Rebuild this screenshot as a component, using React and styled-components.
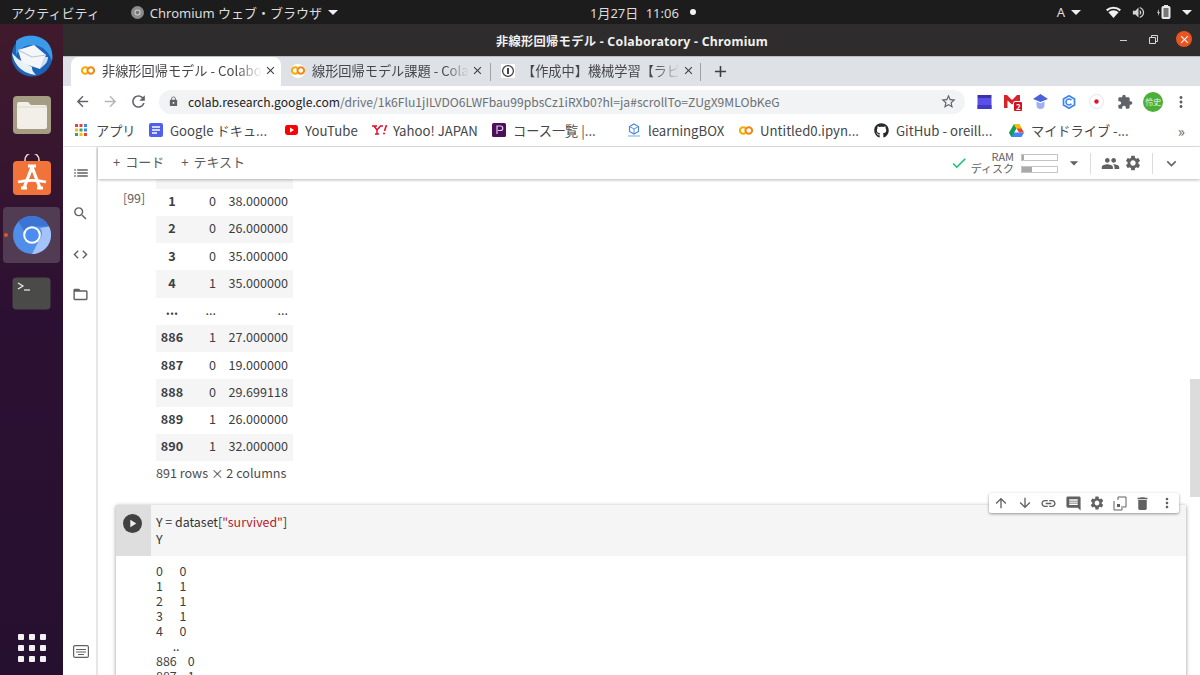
import styled, { createGlobalStyle } from "styled-components";
import {
  MdArrowBack,
  MdArrowForward,
  MdRefresh,
  MdLock,
  MdStarBorder,
  MdExtension,
  MdMoreVert,
  MdClose,
  MdAdd,
  MdList,
  MdSearch,
  MdCode,
  MdFolderOpen,
  MdCheck,
  MdArrowDropDown,
  MdPeople,
  MdSettings,
  MdExpandMore,
  MdArrowUpward,
  MdArrowDownward,
  MdLink,
  MdInsertComment,
  MdDelete,
  MdPlayArrow,
  MdVolumeUp,
} from "react-icons/md";
import { FaGithub } from "react-icons/fa";

const desktopFont = `"Noto Sans", "Noto Sans CJK JP", sans-serif`;
const pageFont = `"Noto Sans CJK JP", "Noto Sans", sans-serif`;

const GlobalStyle = createGlobalStyle`
  html, body {
    margin: 0;
    width: 1200px;
    height: 675px;
    overflow: hidden;
    font-family: ${pageFont};
  }
  * { box-sizing: border-box; }
`;

const Screen = styled.div`
  width: 1200px;
  height: 675px;
  display: flex;
  flex-direction: column;
  overflow: hidden;
`;

const TopBar = styled.div`
  height: 24px;
  flex: none;
  background: #1c1c1c;
  color: #dcdcdc;
  font-family: ${desktopFont};
  font-size: 13px;
  display: grid;
  grid-template-columns: 579px auto 1fr;
  align-items: center;
  padding: 0 8px 0 11px;
`;

const TopLeft = styled.div`
  display: flex;
  align-items: center;
`;

const AppMenu = styled.div`
  display: flex;
  align-items: center;
  gap: 6px;
  margin-left: 31px;
`;

const Clock = styled.div`
  display: flex;
  align-items: center;
  gap: 8px;
  word-spacing: 4px;
`;

const Dot = styled.span`
  width: 6px;
  height: 6px;
  margin-left: 3px;
  border-radius: 50%;
  background: #f2f2f2;
`;

const TopRight = styled.div`
  display: flex;
  align-items: center;
  justify-content: flex-end;
  gap: 10px;
`;

const Caret = styled.span`
  width: 0;
  height: 0;
  border-left: 5px solid transparent;
  border-right: 5px solid transparent;
  border-top: 5px solid #efefef;
  margin-left: ${(p) => p.$left || 0}px;
`;

const SpeakerIcon = styled(MdVolumeUp)`
  color: #d4d4d4;
`;

const WifiSlot = styled.span`
  display: flex;
  margin-left: 15px;
`;

const Body = styled.div`
  flex: 1;
  display: flex;
  min-height: 0;
`;

const Dock = styled.div`
  width: 63px;
  flex: none;
  background: linear-gradient(180deg, #401a2c 0%, #2c1033 45%, #26102f 100%);
  display: flex;
  flex-direction: column;
  align-items: center;
  padding: 2px 0 13px;
`;

const DockSlot = styled.div`
  height: 56px;
  width: 57px;
  margin: ${(p) => (p.$active ? "2.75px 0 0.75px" : "1.75px 0")};
  flex: none;
  position: relative;
  display: flex;
  align-items: center;
  justify-content: center;
  border-radius: 4px;
  background: ${(p) => (p.$active ? "#523c53" : "transparent")};
`;

const ActiveDot = styled.span`
  position: absolute;
  left: 1px;
  top: 26px;
  width: 4px;
  height: 4px;
  border-radius: 50%;
  background: #e95420;
`;

const DockGrid = styled.div`
  margin-top: auto;
  display: grid;
  grid-template-columns: repeat(3, 6px);
  gap: 5px;
`;

const GridDot = styled.span`
  width: 6px;
  height: 6px;
  border-radius: 1px;
  background: #f2f0f2;
`;

const Window = styled.div`
  flex: 1;
  min-width: 0;
  display: flex;
  flex-direction: column;
  background: #fff;
`;

const TitleBar = styled.div`
  height: 32px;
  flex: none;
  position: relative;
  background: #2e2c2c;
  color: #f0f0f0;
  font-family: ${desktopFont};
  font-size: 12.3px;
  font-weight: 700;
  display: flex;
  align-items: center;
  justify-content: center;
  padding: 2px 0 0 1px;
  letter-spacing: 0.25px;
`;

const WindowButtons = styled.div`
  position: absolute;
  right: 8px;
  top: 7px;
  display: flex;
  align-items: center;
`;

const MinButton = styled.span`
  width: 7px;
  height: 1.5px;
  background: #cfcfcf;
  margin: 3px 22px 0 0;
`;

const RestoreIcon = styled.svg`
  margin-right: 18px;
`;

const CloseButton = styled.span`
  width: 16px;
  height: 16px;
  border-radius: 50%;
  background: #e95420;
  color: #fff;
  display: flex;
  align-items: center;
  justify-content: center;
`;

const TabStrip = styled.div`
  height: 30px;
  flex: none;
  background: #dee1e6;
  border-top: 1px solid #b9bcc1;
  display: flex;
  align-items: flex-end;
  padding-left: 8px;
  color: #45474a;
  font-size: 13.2px;
`;

const Tab = styled.div`
  width: ${(p) => (p.$active ? 210 : 209)}px;
  height: 29px;
  display: flex;
  align-items: center;
  padding: 0 7px 2px 10px;
  border-radius: 8px 8px 0 0;
  position: relative;
  background: ${(p) => (p.$active ? "#fff" : "transparent")};
`;

const TabIcon = styled.span`
  width: 14px;
  height: 14px;
  flex: none;
  display: flex;
  align-items: center;
  justify-content: center;
  margin-right: 7px;
  border-radius: 50%;
  background: ${(p) => (p.$active ? "transparent" : "#fff")};
`;

const TabTitle = styled.span`
  flex: 1;
  white-space: nowrap;
  -webkit-mask-image: linear-gradient(90deg, #000 84%, transparent 100%);
  mask-image: linear-gradient(90deg, #000 84%, transparent 100%);
`;

const TabClose = styled.span`
  flex: none;
  display: flex;
  margin-left: 2px;
  color: #3c4043;
`;

const TabSep = styled.span`
  width: 1px;
  height: 18px;
  flex: none;
  background: #9ea1a6;
  margin-bottom: 5px;
`;

const NewTab = styled.span`
  display: flex;
  margin: 0 0 5px 10px;
  color: #3c4043;
`;

const NavBar = styled.div`
  height: 31px;
  flex: none;
  display: flex;
  align-items: center;
  padding-left: 5px;
  color: #5f6368;
`;

const NavButton = styled.span`
  width: 28px;
  display: flex;
  justify-content: center;
  color: ${(p) => (p.$off ? "#b3b5b8" : "#5f6368")};
`;

const Omnibox = styled.div`
  width: 806px;
  height: 24px;
  margin-left: 7px;
  background: #f1f3f4;
  border-radius: 12px;
  display: flex;
  align-items: center;
  padding: 0 8px 0 9px;
  font-size: 12.13px;
`;

const Url = styled.span`
  flex: 1;
  margin: 0 0 1px 9px;
  color: #6b7074;
  white-space: nowrap;
`;

const UrlHost = styled.span`
  color: #202124;
`;

const ExtTray = styled.div`
  display: grid;
  grid-template-columns: repeat(8, 28.2px);
  justify-items: center;
  align-items: center;
  margin-left: 5px;
`;

const Avatar = styled.span`
  width: 20px;
  height: 20px;
  border-radius: 50%;
  background: #4caf38;
  color: #e8f5e2;
  font-size: 8px;
  display: flex;
  align-items: center;
  justify-content: center;
`;

const Badge = styled.span`
  position: absolute;
  right: -3px;
  bottom: -4px;
  width: 10px;
  height: 11px;
  background: #d50f1c;
  border: 1px solid #fff;
  border-radius: 2px;
  color: #fff;
  font-size: 8px;
  font-weight: 700;
  line-height: 9px;
  text-align: center;
`;

const ExtIcon = styled.span`
  position: relative;
  display: flex;
`;

const BookmarkBar = styled.div`
  height: 30px;
  flex: none;
  display: flex;
  align-items: center;
  padding: 0 0 3px 12px;
  border-bottom: 1px solid #e3e4e6;
  color: #45474a;
  font-size: 13.2px;
`;

const Bookmark = styled.div`
  width: ${(p) => p.$w}px;
  flex: none;
  display: flex;
  align-items: center;
  gap: ${(p) => p.$gap || 7}px;
  white-space: nowrap;
`;

const MoreBookmarks = styled.span`
  margin-left: auto;
  margin-right: 15px;
  font-size: 15px;
  color: #5f6368;
`;

const Workspace = styled.div`
  flex: 1;
  min-height: 0;
  display: flex;
`;

const SideRail = styled.div`
  width: 35px;
  flex: none;
  border-right: 2px solid #e6e6e6;
  display: flex;
  flex-direction: column;
  align-items: center;
  padding: 6px 0 0 2px;
  color: #616161;
`;

const RailIcon = styled.span`
  height: 40.5px;
  flex: none;
  display: flex;
  align-items: center;
`;

const RailFoot = styled.span`
  margin-top: auto;
  margin-bottom: 17px;
  display: flex;
`;

const MainColumn = styled.div`
  flex: 1;
  min-width: 0;
  display: flex;
  flex-direction: column;
`;

const ColabBar = styled.div`
  height: 32px;
  flex: none;
  position: relative;
  z-index: 2;
  display: flex;
  align-items: center;
  padding: 0 19px 3px 15px;
  color: #5a5a5a;
  font-size: 13px;
  background: #fff;
  box-shadow: 0 1px 3px rgba(0, 0, 0, 0.28);
`;

const AddButton = styled.span`
  display: flex;
  align-items: center;
  gap: 5px;
  margin-right: 17px;
`;

const Resources = styled.div`
  margin-left: auto;
  margin-bottom: -3px;
  display: flex;
  align-items: center;
  color: #5f6368;
`;

const ResourceLabels = styled.div`
  display: flex;
  flex-direction: column;
  align-items: flex-end;
  margin: -2px 0 0 3px;
  font-size: 11px;
  line-height: 12px;
`;

const Meters = styled.div`
  display: flex;
  flex-direction: column;
  gap: 5px;
  margin-left: 7px;
`;

const Meter = styled.div`
  width: 37px;
  height: 7px;
  border: 1px solid #c4c4c4;
  background: linear-gradient(90deg, #a9a9a9 ${(p) => p.$pct}%, #fff ${(p) => p.$pct}%);
`;

const BarSep = styled.span`
  width: 1px;
  height: 21px;
  background: #dcdcdc;
  margin: 0 ${(p) => p.$right}px 0 ${(p) => p.$left}px;
`;

const BarIcon = styled.span`
  display: flex;
  margin-right: ${(p) => p.$right || 0}px;
  margin-left: ${(p) => p.$left || 0}px;
  color: #616161;
`;

const Notebook = styled.div`
  flex: 1;
  min-height: 0;
  position: relative;
  overflow: hidden;
  padding: 0 14px 0 18px;
  color: #3c4043;
  font-size: 12.6px;
`;

const ScrollThumb = styled.div`
  position: absolute;
  right: 0;
  top: 200px;
  width: 10px;
  height: 118px;
  background: #dcdcdc;
`;

const OutputBlock = styled.div`
  display: flex;
  height: 326px;
`;

const Prompt = styled.div`
  width: 40px;
  flex: none;
  padding: 11px 0 0 7px;
  color: #616161;
  font-size: 12.4px;
  line-height: 16px;
`;

const OutputBody = styled.div`
  display: flex;
  flex-direction: column;
`;

const DataTable = styled.table`
  border-collapse: collapse;
  width: 137px;
  table-layout: fixed;
  color: #3c4043;
`;

const DataRow = styled.tr`
  height: ${(p) => (p.$short ? 9.5 : 27.25)}px;
  background: ${(p) => (p.$shade ? "#f5f5f5" : "#fff")};
`;

const IndexCell = styled.th`
  width: 32px;
  padding: 0 0 3px;
  font-weight: 700;
  text-align: center;
`;

const ValueCell = styled.td`
  width: ${(p) => p.$w}px;
  padding: 0 5px 3px 0;
  text-align: right;
`;

const RowCount = styled.div`
  margin-top: 3px;
  line-height: 18px;
  color: #4a4d50;
`;

const Cell = styled.div`
  position: relative;
  height: 300px;
  background: #fff;
  box-shadow: 0 1px 4px rgba(0, 0, 0, 0.42);
`;

const CellInput = styled.div`
  height: 51px;
  display: flex;
  background: #f5f5f5;
`;

const RunGutter = styled.div`
  width: 35px;
  flex: none;
  background: #dedede;
  padding: 9px 0 0 7px;
`;

const RunButton = styled.span`
  width: 19px;
  height: 19px;
  border-radius: 50%;
  background: #424242;
  color: #f0f0f0;
  display: flex;
  align-items: center;
  justify-content: center;
`;

const Code = styled.div`
  padding: 9px 0 0 5px;
  line-height: 16.5px;
  color: #2f3437;
  font-size: 12.4px;
  white-space: pre;
`;

const Str = styled.span`
  color: #b3202c;
`;

const Stdout = styled.pre`
  margin: 0;
  padding: 8px 0 0 40px;
  font-family: ${pageFont};
  font-size: 12.4px;
  line-height: 15px;
  color: #3c4043;
`;

const CellTools = styled.div`
  position: absolute;
  right: 7px;
  top: -12px;
  width: 190px;
  height: 20px;
  background: #fff;
  border-radius: 2px;
  box-shadow: 0 1px 3px rgba(0, 0, 0, 0.4);
  display: flex;
  align-items: center;
  justify-content: space-between;
  padding: 0 4px;
  color: #616161;
  z-index: 1;
`;

const ColabLogo = () => (
  <svg width="14" height="9" viewBox="0 0 28 18">
    <path d="M13 4.5A6.5 6.5 0 1 0 13 13.5" fill="none" stroke="#f9ab00" strokeWidth="4" />
    <path d="M15 4.5A6.5 6.5 0 1 1 15 13.5A6.5 6.5 0 0 1 15 4.5" fill="none" stroke="#f08a10" strokeWidth="4" />
  </svg>
);

const ChromiumLogo = ({ size = 38 }) => (
  <svg width={size} height={size} viewBox="0 0 38 38">
    <circle cx="19" cy="19" r="19" fill="#4f8fea" />
    <path d="M19 0A19 19 0 0 1 36 10.5L19 10.5A8.5 8.5 0 0 0 11 15L5.5 5.5A19 19 0 0 1 19 0Z" fill="#3b74d4" />
    <path d="M36 10.5A19 19 0 0 1 19 38L26.5 23.5A8.5 8.5 0 0 0 27 12Z" fill="#a3c3fa" />
    <circle cx="19" cy="19" r="8.8" fill="#fff" />
    <circle cx="19" cy="19" r="6.8" fill="#4a8cf0" />
  </svg>
);

const Thunderbird = () => (
  <svg width="44" height="44" viewBox="0 0 44 44">
    <circle cx="22" cy="22" r="20.5" fill="#1d63b8" />
    <path d="M6 7C12 1 26 -1 36 7C42 13 43 21 42 27C38 15 30 11 22 11C14 11 10 15 6 21Z" fill="#3c9be8" />
    <path d="M2 19C4 29 10 39 26 41C22 37 22 35 22 33L8 25Z" fill="#e8f0fa" />
    <path d="M8 16L24 11L36 21L30 35L12 29Z" fill="#f4f6fa" />
    <path d="M8 16L22 23L36 21" fill="none" stroke="#b9c6d8" strokeWidth="1.2" />
    <path d="M30 35C34 31 38 29 38 23L34 23Z" fill="#cfe0f5" />
  </svg>
);

const FilesIcon = () => (
  <svg width="40" height="40" viewBox="0 0 40 40">
    <rect x="1" y="1" width="38" height="38" rx="4" fill="#a59c84" />
    <path d="M5 9a2 2 0 0 1 2-2h9l3 3h14a2 2 0 0 1 2 2v20a2 2 0 0 1-2 2H7a2 2 0 0 1-2-2Z" fill="#f2efe9" />
    <path d="M5 12h30" stroke="#dedad1" strokeWidth="1" />
  </svg>
);

const StoreIcon = () => (
  <svg width="40" height="42" viewBox="0 0 40 42">
    <path d="M13 9V6a7 7 0 0 1 14 0v3" fill="none" stroke="#e9d6c8" strokeWidth="1.6" />
    <rect x="1" y="7" width="38" height="34" rx="4" fill="#f0743a" />
    <path d="M20 13L12 34M20 13L28 34" stroke="#fff" strokeWidth="3.2" fill="none" />
    <path d="M16 12H24M6 28C14 26 26 26 34 28M9 34H15M25 34H31" stroke="#fff" strokeWidth="2.8" fill="none" />
  </svg>
);

const TerminalIcon = () => (
  <svg width="39" height="33" viewBox="0 0 39 33">
    <rect x="0.5" y="0.5" width="38" height="32" rx="4" fill="#4a4a48" />
    <path d="M6 6L11 9L6 12" fill="none" stroke="#f0f0f0" strokeWidth="1.2" />
    <path d="M12 13H18" stroke="#f0f0f0" strokeWidth="1.2" />
  </svg>
);

const MiniChromium = () => (
  <svg width="13" height="13" viewBox="0 0 13 13">
    <circle cx="6.5" cy="6.5" r="6.5" fill="#8b8b8b" />
    <circle cx="6.5" cy="6.5" r="3" fill="#d0d0d0" />
    <circle cx="6.5" cy="6.5" r="2" fill="#777" />
  </svg>
);

const WifiIcon = () => (
  <svg width="15" height="12" viewBox="0 0 15 12">
    <path d="M0 3.6A11 11 0 0 1 15 3.6L13.6 5.2A9 9 0 0 0 1.4 5.2Z" fill="#f0f0f0" />
    <path d="M2.4 6.2A7.6 7.6 0 0 1 12.6 6.2L7.5 12Z" fill="#f0f0f0" />
  </svg>
);

const AppsIcon = () => (
  <svg width="12" height="12" viewBox="0 0 12 12">
    {["#ea4335", "#ea4335", "#4285f4", "#fbbc04", "#34a853", "#4285f4", "#34a853", "#fbbc04", "#ea4335"].map((c, i) => (
      <rect key={i} x={(i % 3) * 4.5} y={Math.floor(i / 3) * 4.5} width="3" height="3" fill={c} />
    ))}
  </svg>
);

const DocsIcon = () => (
  <svg width="14" height="14" viewBox="0 0 14 14">
    <rect width="14" height="14" rx="2" fill="#4f5ff0" />
    <path d="M3 4H11M3 7H11M3 10H8" stroke="#fff" strokeWidth="1.3" />
  </svg>
);

const YouTubeIcon = () => (
  <svg width="13" height="10" viewBox="0 0 13 10">
    <rect width="13" height="10" rx="2.4" fill="#f00" />
    <path d="M5 2.6L9 5L5 7.4Z" fill="#fff" />
  </svg>
);

const YahooIcon = () => (
  <svg width="15" height="10" viewBox="0 0 15 10">
    <path d="M0 1H5M8 1H11M2 1L5 5V9M8.5 1L5 5M3 9H7" fill="none" stroke="#e5102d" strokeWidth="1.5" />
    <path d="M14.5 0L12.5 6" stroke="#e5102d" strokeWidth="1.6" />
    <circle cx="12" cy="8.4" r="1" fill="#e5102d" />
  </svg>
);

const PurpleIcon = () => (
  <svg width="14" height="14" viewBox="0 0 14 14">
    <rect width="14" height="14" rx="1.5" fill="#4b0f5c" />
    <path d="M5 11V3H8.5A2.2 2.2 0 0 1 8.5 7.5H6" fill="none" stroke="#e4cde9" strokeWidth="1.2" />
  </svg>
);

const LearningIcon = () => (
  <svg width="14" height="14" viewBox="0 0 14 14">
    <path d="M7 1L11.5 3.5V8.5L7 11L2.5 8.5V3.5Z" fill="none" stroke="#4a86d8" strokeWidth="1.2" />
    <path d="M2.5 3.5L7 6L11.5 3.5M7 6V11" fill="none" stroke="#4a86d8" strokeWidth="0.9" />
    <path d="M1 13H13" stroke="#8fb6e6" strokeWidth="1.2" />
  </svg>
);

const DriveIcon = () => (
  <svg width="15" height="13" viewBox="0 0 15 13">
    <path d="M0 8.5L2.5 13H12.5L15 8.5Z" fill="#4285f4" />
    <path d="M5 0L0 8.5L2.5 13L7.5 4.4Z" fill="#0f9d58" />
    <path d="M10 0L15 8.5H10L7.5 4.4Z" fill="#ea4335" />
    <path d="M5 0H10L12.5 4.4H7.5Z" fill="#fbbc04" />
  </svg>
);

const MirrorIcon = () => (
  <svg width="14" height="15" viewBox="0 0 14 15">
    <path d="M5 1H13V11H8" fill="none" stroke="#616161" strokeWidth="1" />
    <path d="M5 1V4M1 5V14H9V12" fill="none" stroke="#616161" strokeWidth="1" />
    <rect x="4" y="8" width="3" height="3" fill="#616161" />
  </svg>
);

const TerminalRailIcon = () => (
  <svg width="16" height="13" viewBox="0 0 16 13">
    <rect x="0.6" y="0.6" width="14.8" height="11.8" rx="1.5" fill="none" stroke="#616161" strokeWidth="1.2" />
    <path d="M3 4.5H13M3 7H13M5 9.5H11" stroke="#616161" strokeWidth="1.2" />
  </svg>
);

const rows = [
  ["1", "0", "38.000000"],
  ["2", "0", "26.000000"],
  ["3", "0", "35.000000"],
  ["4", "1", "35.000000"],
  ["...", "...", "..."],
  ["886", "1", "27.000000"],
  ["887", "0", "19.000000"],
  ["888", "0", "29.699118"],
  ["889", "1", "26.000000"],
  ["890", "1", "32.000000"],
];

const shaded = ["2", "4", "886", "888", "890"];

const bookmarks = [
  { w: 74, icon: <AppsIcon />, gap: 9, label: "アプリ" },
  { w: 136, icon: <DocsIcon />, label: "Google ドキュ..." },
  { w: 87, icon: <YouTubeIcon />, label: "YouTube" },
  { w: 120, icon: <YahooIcon />, gap: 6, label: "Yahoo! JAPAN" },
  { w: 135, icon: <PurpleIcon />, label: "コース一覧 |..." },
  { w: 112, icon: <LearningIcon />, label: "learningBOX" },
  { w: 135, icon: <ColabLogo />, label: "Untitled0.ipyn..." },
  { w: 135, icon: <FaGithub size={15} color="#24292e" />, label: "GitHub - oreill..." },
  { w: 130, icon: <DriveIcon />, label: "マイドライブ -..." },
];

const stdout = `0      0
1      1
2      1
3      1
4      0
      ..
886    0
887    1`;

export default function App() {
  return (
    <Screen>
      <GlobalStyle />
      <TopBar>
        <TopLeft>
          アクティビティ
          <AppMenu>
            <MiniChromium />
            Chromium ウェブ・ブラウザ
            <Caret />
          </AppMenu>
        </TopLeft>
        <Clock>
          1月27日 11:06
          <Dot />
        </Clock>
        <TopRight>
          A
          <Caret $left={-4} />
          <WifiSlot>
            <WifiIcon />
          </WifiSlot>
          <SpeakerIcon size={15} />
          <svg width="16" height="14" viewBox="0 0 16 14">
            <path d="M1 8L3 4V7H4L2 11V8Z" fill="#bbb" />
            <rect x="6" y="1.5" width="8" height="12" rx="1" fill="#e8e8e8" stroke="#e8e8e8" />
            <rect x="7.5" y="3" width="5" height="9" fill="#777" />
            <rect x="8" y="0" width="4" height="2" fill="#e8e8e8" />
          </svg>
          <Caret />
        </TopRight>
      </TopBar>
      <Body>
        <Dock>
          <DockSlot>
            <Thunderbird />
          </DockSlot>
          <DockSlot>
            <FilesIcon />
          </DockSlot>
          <DockSlot>
            <StoreIcon />
          </DockSlot>
          <DockSlot $active>
            <ActiveDot />
            <ChromiumLogo />
          </DockSlot>
          <DockSlot>
            <TerminalIcon />
          </DockSlot>
          <DockGrid>
            {Array.from({ length: 9 }, (_, i) => (
              <GridDot key={i} />
            ))}
          </DockGrid>
        </Dock>
        <Window>
          <TitleBar>
            非線形回帰モデル - Colaboratory - Chromium
            <WindowButtons>
              <MinButton />
              <RestoreIcon width="9" height="9" viewBox="0 0 9 9">
                <path d="M0.5 2.5H6.5V8.5H0.5Z M2.5 2.5V0.5H8.5V6.5H6.5" fill="none" stroke="#d8d8d8" />
              </RestoreIcon>
              <CloseButton>
                <MdClose size={13} />
              </CloseButton>
            </WindowButtons>
          </TitleBar>
          <TabStrip>
            <Tab $active>
              <TabIcon $active>
                <ColabLogo />
              </TabIcon>
              <TabTitle>非線形回帰モデル - Colabo</TabTitle>
              <TabClose>
                <MdClose size={13} />
              </TabClose>
            </Tab>
            <Tab>
              <TabIcon>
                <ColabLogo />
              </TabIcon>
              <TabTitle>線形回帰モデル課題 - Cola</TabTitle>
              <TabClose>
                <MdClose size={13} />
              </TabClose>
            </Tab>
            <TabSep />
            <Tab>
              <TabIcon>
                <svg width="14" height="14" viewBox="0 0 14 14">
                  <rect width="14" height="14" fill="#fff" />
                  <circle cx="7" cy="7" r="5.4" fill="none" stroke="#444" strokeWidth="1.3" />
                  <path d="M7 4V10" stroke="#444" strokeWidth="2" />
                </svg>
              </TabIcon>
              <TabTitle>【作成中】機械学習【ラビ</TabTitle>
              <TabClose>
                <MdClose size={13} />
              </TabClose>
            </Tab>
            <TabSep />
            <NewTab>
              <MdAdd size={19} />
            </NewTab>
          </TabStrip>
          <NavBar>
            <NavButton>
              <MdArrowBack size={17} />
            </NavButton>
            <NavButton $off>
              <MdArrowForward size={17} />
            </NavButton>
            <NavButton>
              <MdRefresh size={19} />
            </NavButton>
            <Omnibox>
              <MdLock size={11} />
              <Url>
                <UrlHost>colab.research.google.com</UrlHost>
                /drive/1k6Flu1jILVDO6LWFbau99pbsCz1iRXb0?hl=ja#scrollTo=ZUgX9MLObKeG
              </Url>
              <MdStarBorder size={17} />
            </Omnibox>
            <ExtTray>
              <svg width="15" height="14" viewBox="0 0 15 14">
                <rect x="0.5" y="0" width="14" height="3" fill="#3b32a8" />
                <rect x="0.5" y="3" width="14" height="11" fill="#5a50e8" />
                <rect x="0.5" y="10" width="14" height="4" fill="#4339c9" />
              </svg>
              <ExtIcon>
                <svg width="16" height="13" viewBox="0 0 16 13">
                  <path d="M0 0H3L8 5L13 0H16V13H12.5V5.5L8 9.5L3.5 5.5V13H0Z" fill="#d8232a" />
                </svg>
                <Badge>2</Badge>
              </ExtIcon>
              <svg width="15" height="15" viewBox="0 0 15 15">
                <path d="M7.5 0L15 5L7.5 8L0 5Z" fill="#4a62d8" />
                <path d="M3.5 7.5L7.5 9.2L11.5 7.5V11A4 4 0 0 1 3.5 11Z" fill="#9db0f5" />
              </svg>
              <svg width="14" height="14" viewBox="0 0 14 14">
                <path d="M7 0.8L12.5 3.9V10.1L7 13.2L1.5 10.1V3.9Z" fill="none" stroke="#3b82f6" strokeWidth="1.7" />
                <path d="M9.4 5.2A3 3 0 1 0 9.4 8.8" fill="none" stroke="#3b82f6" strokeWidth="1.6" />
              </svg>
              <svg width="15" height="15" viewBox="0 0 15 15">
                <circle cx="7.5" cy="7.5" r="7" fill="#fff" stroke="#e4e4e4" />
                <circle cx="7.5" cy="7.5" r="2.2" fill="#e8112d" />
              </svg>
              <MdExtension size={16} />
              <Avatar>怜史</Avatar>
              <MdMoreVert size={18} />
            </ExtTray>
          </NavBar>
          <BookmarkBar>
            {bookmarks.map((b) => (
              <Bookmark key={b.label} $w={b.w} $gap={b.gap}>
                {b.icon}
                {b.label}
              </Bookmark>
            ))}
            <MoreBookmarks>»</MoreBookmarks>
          </BookmarkBar>
          <Workspace>
            <SideRail>
              <RailIcon>
                <MdList size={18} />
              </RailIcon>
              <RailIcon>
                <MdSearch size={17} />
              </RailIcon>
              <RailIcon>
                <MdCode size={17} />
              </RailIcon>
              <RailIcon>
                <MdFolderOpen size={17} />
              </RailIcon>
              <RailFoot>
                <TerminalRailIcon />
              </RailFoot>
            </SideRail>
            <MainColumn>
              <ColabBar>
                <AddButton>
                  <span>+</span>
                  <span>コード</span>
                </AddButton>
                <AddButton>
                  <span>+</span>
                  <span>テキスト</span>
                </AddButton>
                <Resources>
                  <MdCheck size={18} color="#0bc66b" />
                  <ResourceLabels>
                    <span>RAM</span>
                    <span>ディスク</span>
                  </ResourceLabels>
                  <Meters>
                    <Meter $pct={5} />
                    <Meter $pct={30} />
                  </Meters>
                  <BarIcon $left={6}>
                    <MdArrowDropDown size={20} />
                  </BarIcon>
                  <BarSep $left={6} $right={10} />
                  <BarIcon $right={4}>
                    <MdPeople size={19} />
                  </BarIcon>
                  <BarIcon>
                    <MdSettings size={18} />
                  </BarIcon>
                  <BarSep $left={10} $right={9} />
                  <BarIcon>
                    <MdExpandMore size={19} />
                  </BarIcon>
                </Resources>
              </ColabBar>
              <Notebook>
                <ScrollThumb />
                <OutputBlock>
                  <Prompt>[99]</Prompt>
                  <OutputBody>
                    <DataTable>
                      <tbody>
                        <DataRow $short $shade>
                          <IndexCell />
                          <ValueCell $w={33} />
                          <ValueCell $w={72} />
                        </DataRow>
                        {rows.map(([index, pclass, age]) => (
                          <DataRow key={index} $shade={shaded.includes(index)}>
                            <IndexCell>{index}</IndexCell>
                            <ValueCell $w={33}>{pclass}</ValueCell>
                            <ValueCell $w={72}>{age}</ValueCell>
                          </DataRow>
                        ))}
                      </tbody>
                    </DataTable>
                    <RowCount>891 rows × 2 columns</RowCount>
                  </OutputBody>
                </OutputBlock>
                <Cell>
                  <CellTools>
                    <MdArrowUpward size={16} />
                    <MdArrowDownward size={16} />
                    <MdLink size={17} />
                    <MdInsertComment size={17} />
                    <MdSettings size={16} />
                    <MirrorIcon />
                    <MdDelete size={17} />
                    <MdMoreVert size={16} />
                  </CellTools>
                  <CellInput>
                    <RunGutter>
                      <RunButton>
                        <MdPlayArrow size={13} />
                      </RunButton>
                    </RunGutter>
                    <Code>
                      Y = dataset[<Str>"survived"</Str>]{"\n"}Y
                    </Code>
                  </CellInput>
                  <Stdout>{stdout}</Stdout>
                </Cell>
              </Notebook>
            </MainColumn>
          </Workspace>
        </Window>
      </Body>
    </Screen>
  );
}
